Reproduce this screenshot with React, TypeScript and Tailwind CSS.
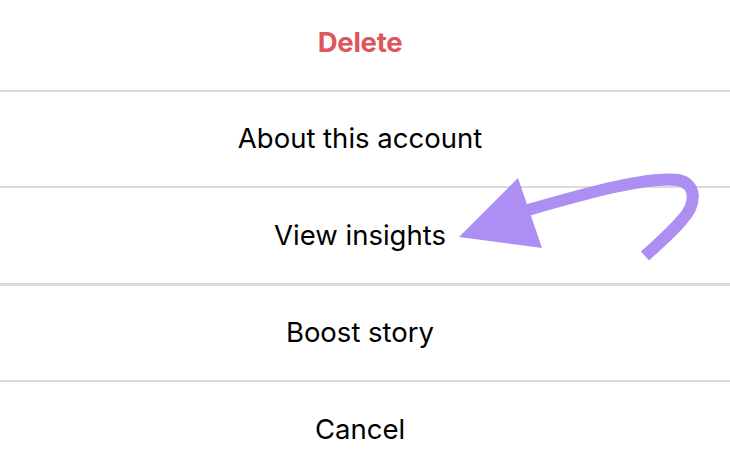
import React from "react";

const Row = ({ children, className = "" }: { children: React.ReactNode; className?: string }) => (
  <div className={`flex items-center justify-center pr-[10px] ${className}`}>{children}</div>
);

export default function App() {
  return (
    <div
      className="relative w-[730px] h-[468px] overflow-hidden bg-white text-black"
      style={{ fontFamily: "Inter, 'Noto Sans', sans-serif" }}
    >
      <div className="flex flex-col">
        <Row className="h-[92px] border-b-2 border-[#dadada] pb-[4px]">
          <span className="text-[27.5px] font-bold text-[#e0555b] tracking-[-0.3px]">Delete</span>
        </Row>
        <Row className="h-[96px] border-b-2 border-[#dadada]">
          <span className="text-[27.5px]">About this account</span>
        </Row>
        <Row className="h-[98px] border-b-[3px] border-[#dadada]">
          <span className="text-[27.5px]">View insights</span>
        </Row>
        <Row className="h-[96px] border-b-2 border-[#dadada]">
          <span className="text-[27.5px]">Boost story</span>
        </Row>
        <Row className="h-[96px]">
          <span className="text-[27.5px]">Cancel</span>
        </Row>
      </div>
      <svg className="absolute left-0 top-0" width="730" height="468" viewBox="0 0 730 468">
        <path
          d="M 528 210 C 590 192, 650 176, 678 180 C 698 184, 696 205, 682 220 C 670 234, 658 244, 645 256"
          fill="none"
          stroke="#ad8ff3"
          strokeWidth="12"
        />
        <polygon points="518,178 459,237 542,248" fill="#ad8ff3" />
      </svg>
    </div>
  );
}
